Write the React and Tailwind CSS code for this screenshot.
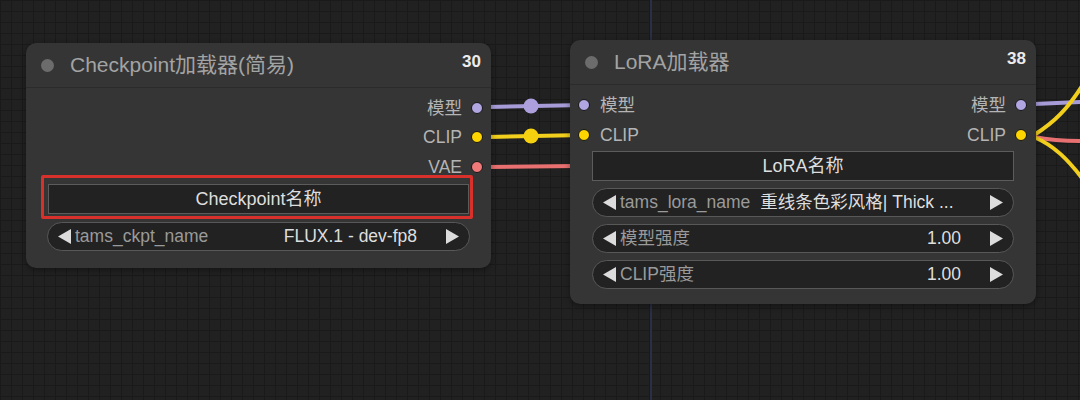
import React from "react";

const FONT = { fontFamily: '"Liberation Sans", Arial, "Noto Sans CJK SC", sans-serif' };

function Dot({ color }) {
  return (
    <span
      className="block w-[12px] h-[12px] rounded-full border-[1.5px] border-[#161616] shrink-0"
      style={{ backgroundColor: color }}
    />
  );
}

function Arrow({ dir }) {
  return (
    <svg width="15" height="17" viewBox="0 0 15 17" className="shrink-0">
      {dir === "left" ? (
        <polygon points="14,1 14,16 1,8.5" fill="#dcdcdc" />
      ) : (
        <polygon points="1,1 1,16 14,8.5" fill="#dcdcdc" />
      )}
    </svg>
  );
}

function Combo({ label, value, valueClass = "text-right" }) {
  return (
    <div className="h-[29px] rounded-full bg-[#222222] border border-[#585858] flex items-center pl-[9px] pr-[9px] text-[17.5px]">
      <Arrow dir="left" />
      <span className="ml-[3px] text-[#9a9a9a] whitespace-nowrap">{label}</span>
      <span className={"flex-1 text-[#dedede] whitespace-nowrap overflow-hidden " + valueClass}>{value}</span>
      <span className="w-[28px] shrink-0" />
      <Arrow dir="right" />
    </div>
  );
}

function Header({ title, id }) {
  return (
    <div className="h-[45px] flex items-center pl-[15px] pr-[10px] border-b border-[#2b2b2b]">
      <span className="w-[13px] h-[13px] rounded-full bg-[#6c6c6c] shrink-0" />
      <span className="ml-[16px] text-[21px] text-[#a3a3a3] whitespace-nowrap">{id === "30" ? title : title}</span>
      <span className="ml-auto self-start mt-[6px] text-[17px] font-bold text-[#ececec]">{id}</span>
    </div>
  );
}

const PURPLE = "#b2a6e2";
const YELLOW = "#ffd500";
const RED = "#f07a7a";

export default function App() {
  return (
    <div
      className="relative w-[1080px] h-[400px] overflow-hidden bg-[#212121] bg-[image:linear-gradient(to_right,#1a1a1a_1px,transparent_1px),linear-gradient(to_bottom,#1a1a1a_1px,transparent_1px)] bg-[size:11px_11px]"
      style={FONT}
    >
      {/* faint blue guide line */}
      <div className="absolute left-[650px] top-0 w-[2px] h-[400px] bg-[#2a2e46]" />

      {/* wires */}
      <svg className="absolute inset-0" width="1080" height="400">
        <g fill="none" strokeWidth="4" strokeLinecap="round">
          <path d="M488 107 L584 105" stroke="#a89cd8" />
          <path d="M488 137 L584 135" stroke="#f2cf1c" />
          <path d="M488 167 L575 166" stroke="#e87070" />
          <path d="M1034 104 L1080 102" stroke="#a89cd8" />
          <path d="M1034 135 C1055 122, 1068 108, 1082 86" stroke="#f2cf1c" />
          <path d="M1034 137 C1050 140, 1060 141, 1082 141" stroke="#e87070" />
          <path d="M1034 137 C1055 146, 1068 160, 1082 178" stroke="#f2cf1c" />
        </g>
        <circle cx="531" cy="106" r="7.5" fill="#ac9fdc" />
        <circle cx="531" cy="136" r="7.5" fill="#f6d10f" />
      </svg>

      {/* Node 1 */}
      <div className="absolute left-[26px] top-[43px] w-[465px] h-[225px] rounded-[10px] bg-[#353535] shadow-[0_2px_6px_rgba(0,0,0,0.4)]">
        <Header title="Checkpoint加载器(简易)" id="30" />
        <div className="pt-[5px] flex flex-col">
          {["模型", "CLIP", "VAE"].map((l, i) => (
            <div key={l} className="h-[29.5px] flex items-center justify-end pr-[8px] gap-[9px]">
              <span className="text-[17.5px] text-[#b4b4b4]">{l}</span>
              <Dot color={[PURPLE, YELLOW, RED][i]} />
            </div>
          ))}
        </div>
        <div className="px-[21px] pt-[2.5px] flex flex-col gap-[8px]">
          <div className="relative">
            <div className="absolute -left-[6px] -right-[3px] -top-[9px] -bottom-[5px] border-[3px] border-[#d8312b] rounded-[2px]" />
            <div className="relative h-[30px] bg-[#222222] border border-[#5c5c5c] flex items-center justify-center text-[18px] text-[#dedede] mx-[1px]">
              Checkpoint名称
            </div>
          </div>
          <Combo label="tams_ckpt_name" value="FLUX.1 - dev-fp8" />
        </div>
      </div>

      {/* Node 2 */}
      <div className="absolute left-[570px] top-[40px] w-[466px] h-[264px] rounded-[10px] bg-[#353535] shadow-[0_2px_6px_rgba(0,0,0,0.4)]">
        <Header title="LoRA加载器" id="38" />
        <div className="pt-[5px] flex flex-col">
          {[["模型", PURPLE], ["CLIP", YELLOW]].map(([l, c]) => (
            <div key={l} className="h-[30px] flex items-center pl-[8px] pr-[9px]">
              <Dot color={c} />
              <span className="ml-[10px] text-[17.5px] text-[#b4b4b4]">{l}</span>
              <span className="ml-auto mr-[9px] text-[17.5px] text-[#b4b4b4]">{l}</span>
              <Dot color={c} />
            </div>
          ))}
        </div>
        <div className="px-[22px] pt-[1px] flex flex-col gap-[7px]">
          <div className="h-[30px] bg-[#222222] border border-[#5c5c5c] flex items-center justify-center text-[18px] text-[#dedede]">
            LoRA名称
          </div>
          <Combo label="tams_lora_name" value="重线条色彩风格| Thick ..." valueClass="ml-[10px] text-left" />
          <Combo label="模型强度" value="1.00" />
          <Combo label="CLIP强度" value="1.00" />
        </div>
      </div>
    </div>
  );
}
